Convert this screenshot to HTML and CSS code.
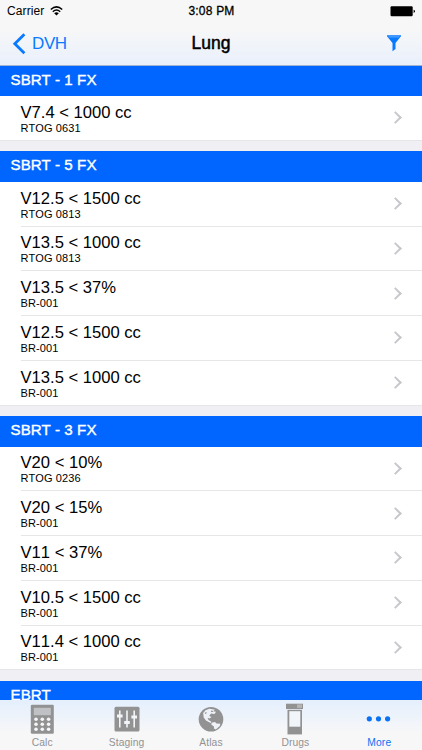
FILE: index.html
```html
<!DOCTYPE html>
<html lang="en">
<head>
<meta charset="utf-8">
<title>Lung</title>
<link rel="stylesheet" href="styles.css">
</head>
<body>
<div class="screen">
  <header class="top">
    <div class="status">
      <div class="carrier"><span>Carrier</span>
        <svg width="13" height="10" viewBox="0 0 13 10"><g fill="none" stroke="#000" stroke-width="1.5"><path d="M.8 3.5Q6.5-1.8 12.2 3.5"/><path d="M2.8 5.7Q6.5 2.4 10.2 5.7"/></g><path d="M4.2 7.2Q6.5 5.4 8.8 7.2L6.5 9.5Z"/></svg>
      </div>
      <div class="time">3:08 PM</div>
      <svg class="battery" width="26" height="11" viewBox="0 0 26 11"><rect x=".5" y=".3" width="22.2" height="10" rx="1.2"/><path d="M23.6 3.7q1.4.4 1.4 1.6t-1.4 1.6z"/></svg>
    </div>
    <div class="nav">
      <div class="back"><svg width="14" height="22" viewBox="0 0 14 22"><path d="M12.4 1.2L2.8 10.7L12.4 20.2" fill="none" stroke="#0a7aff" stroke-width="2.8"/></svg><span>DVH</span></div>
      <h1>Lung</h1>
      <svg class="filter" width="14" height="17" viewBox="0 0 14 17"><path d="M0 .2H14V1.3L8.5 8V14L5.5 16.2V8L0 1.3Z" fill="#087aff"/><path d="M1.5 1.9H12.5" stroke="#8dc3ff" stroke-width=".7"/></svg>
    </div>
  </header>
  <main>
    <section><h2>SBRT - 1 FX</h2>
      <div class="row"><div class="text"><b>V7.4 &lt; 1000 cc</b><small>RTOG 0631</small></div><i class="chevron"></i></div>
    </section>
    <section><h2>SBRT - 5 FX</h2>
      <div class="row"><div class="text"><b>V12.5 &lt; 1500 cc</b><small>RTOG 0813</small></div><i class="chevron"></i></div>
      <div class="row"><div class="text"><b>V13.5 &lt; 1000 cc</b><small>RTOG 0813</small></div><i class="chevron"></i></div>
      <div class="row"><div class="text"><b>V13.5 &lt; 37%</b><small>BR-001</small></div><i class="chevron"></i></div>
      <div class="row"><div class="text"><b>V12.5 &lt; 1500 cc</b><small>BR-001</small></div><i class="chevron"></i></div>
      <div class="row"><div class="text"><b>V13.5 &lt; 1000 cc</b><small>BR-001</small></div><i class="chevron"></i></div>
    </section>
    <section><h2>SBRT - 3 FX</h2>
      <div class="row"><div class="text"><b>V20 &lt; 10%</b><small>RTOG 0236</small></div><i class="chevron"></i></div>
      <div class="row"><div class="text"><b>V20 &lt; 15%</b><small>BR-001</small></div><i class="chevron"></i></div>
      <div class="row"><div class="text"><b>V11 &lt; 37%</b><small>BR-001</small></div><i class="chevron"></i></div>
      <div class="row"><div class="text"><b>V10.5 &lt; 1500 cc</b><small>BR-001</small></div><i class="chevron"></i></div>
      <div class="row"><div class="text"><b>V11.4 &lt; 1000 cc</b><small>BR-001</small></div><i class="chevron"></i></div>
    </section>
    <section><h2>EBRT</h2></section>
  </main>
  <nav class="tabs">
    <div class="tab"><svg width="36" height="36" viewBox="0 0 36 36"><rect x="6.8" y="4.7" width="23" height="29" rx="1.2" fill="#929292"/><rect x="9.8" y="7.8" width="17" height="7.4" fill="#bfc1c5"/><g fill="#f4f6fa"><circle cx="12" cy="19.3" r="1.8"/><circle cx="18.3" cy="19.3" r="1.8"/><circle cx="24.6" cy="19.3" r="1.8"/><circle cx="12" cy="24.3" r="1.8"/><circle cx="18.3" cy="24.3" r="1.8"/><circle cx="24.6" cy="24.3" r="1.8"/><circle cx="12" cy="29.3" r="1.8"/><circle cx="18.3" cy="29.3" r="1.8"/><circle cx="24.6" cy="29.3" r="1.8"/></g></svg><span>Calc</span></div>
    <div class="tab"><svg width="36" height="36" viewBox="0 0 36 36"><rect x="5.5" y="6.8" width="25" height="24.7" rx="1.5" fill="#929292"/><g stroke="#f2f4f8" fill="none"><path d="M10.8 10.5V27.5M18 10.5V27.5M25.2 10.5V27.5" stroke-width="1.6"/><path d="M8 16H13.6M15.2 22.5H20.8M22.4 17H28" stroke-width="3"/></g></svg><span>Staging</span></div>
    <div class="tab"><svg width="36" height="36" viewBox="0 0 36 36"><circle cx="18" cy="19.2" r="12.3" fill="#929292"/><path d="M12.5 10.3L16.5 8.8L22 9.8L20 11.2L23 11.7L21.5 14L18 13.5L16.2 16L18.5 17L16.6 18.4L14.6 17.8L15.5 20L18.4 21.8L17.5 23L13 20.5L10.7 17.5L10.2 13Z" fill="#eef2f8"/><path d="M18.5 22.8L22 22L23.5 23.5L27.3 23.7L26.8 26L22.8 29.4L20.9 28.5L21 26.6L18.4 24.8Z" fill="#eef2f8"/><path d="M18 11.1L20 11.5M12 13.5L13.5 12.5" stroke="#929292" stroke-width="1.2"/></svg><span>Atlas</span></div>
    <div class="tab"><svg width="36" height="36" viewBox="0 0 36 36"><rect x="9" y="3.7" width="17" height="5.3" fill="#929292"/><rect x="20" y="4.4" width="5" height="3.5" fill="#b5b5b5"/><rect x="10.5" y="9.8" width="14.5" height="24.6" fill="#929292"/><rect x="12.3" y="11.2" width="11" height="15.5" fill="#f1f4f9"/></svg><span>Drugs</span></div>
    <div class="tab active"><svg width="36" height="36" viewBox="0 0 36 36"><g fill="#0a72f5"><circle cx="7.3" cy="18.8" r="2.6"/><circle cx="16.5" cy="18.8" r="2.6"/><circle cx="25.6" cy="18.8" r="2.6"/></g></svg><span>More</span></div>
  </nav>
</div>
</body>
</html>
```
FILE: styles.css
```css
* { box-sizing: border-box; }
body { margin: 0; font-family: "Liberation Sans", Arial, sans-serif; color: #000; }
.screen { width: 422px; height: 750px; display: flex; flex-direction: column; overflow: hidden; background: #efeff4; }
svg { display: block; flex: none; }

.top { height: 65.5px; flex: none; background: linear-gradient(#f7f7f7 45%, #e9f0fc); border-bottom: 1px solid #9fb2cf; }
.status { height: 22px; display: grid; grid-template-columns: 1fr auto 1fr; align-items: center; padding: 0 6px 0 7px; font-size: 12px; }
.carrier { display: flex; align-items: center; gap: 6px; letter-spacing: 0.1px; }
.time { -webkit-text-stroke: 0.3px #000; letter-spacing: 0.2px; }
.battery { justify-self: end; }
.nav { height: 43px; display: grid; grid-template-columns: 1fr auto 1fr; align-items: center; padding: 0 21px 0 12px; }
.back { display: flex; align-items: center; gap: 6px; color: #0a7aff; font-size: 17px; letter-spacing: -0.4px; }
.nav h1 { margin: 0 0 0 9px; font-size: 17.5px; font-weight: 400; -webkit-text-stroke: 0.5px #000; }
.filter { justify-self: end; }

main { flex: 1; min-height: 0; overflow: hidden; }
section { margin-bottom: 10.4px; background: #fff; }
h2 { margin: 0; height: 30.6px; padding-left: 10.5px; line-height: 28px; font-size: 15.1px; font-weight: 400; letter-spacing: 0.1px; color: #fff; -webkit-text-stroke: 0.4px #fff; background: #0066ff; }
.row { height: 44.76px; margin-left: 20.5px; padding-right: 20px; display: flex; align-items: center; justify-content: space-between; border-bottom: 1px solid #e6e6e9; }
.row:last-child { margin-left: 0; padding-left: 20.5px; }
.text { display: flex; flex-direction: column; padding-top: 3px; font-kerning: none; }
.text b { font-weight: 400; font-size: 16.6px; line-height: 18px; }
.text small { font-size: 11px; line-height: 13px; letter-spacing: 0.1px; }
.chevron { width: 9px; height: 9px; margin-right: 2.5px; border: solid #c7c7cc; border-width: 2px 2px 0 0; transform: rotate(45deg); }

.tabs { height: 50px; flex: none; display: grid; grid-template-columns: repeat(5, 1fr); background: linear-gradient(#e4effd, #f7f7f8 65%); }
.tab { display: flex; flex-direction: column; align-items: center; color: #929292; font-size: 10.3px; line-height: 12px; letter-spacing: 0.1px; }
.tab span { margin-top: 1px; }
.active { color: #0a72f5; }
.active span { margin-right: 1px; }
```
